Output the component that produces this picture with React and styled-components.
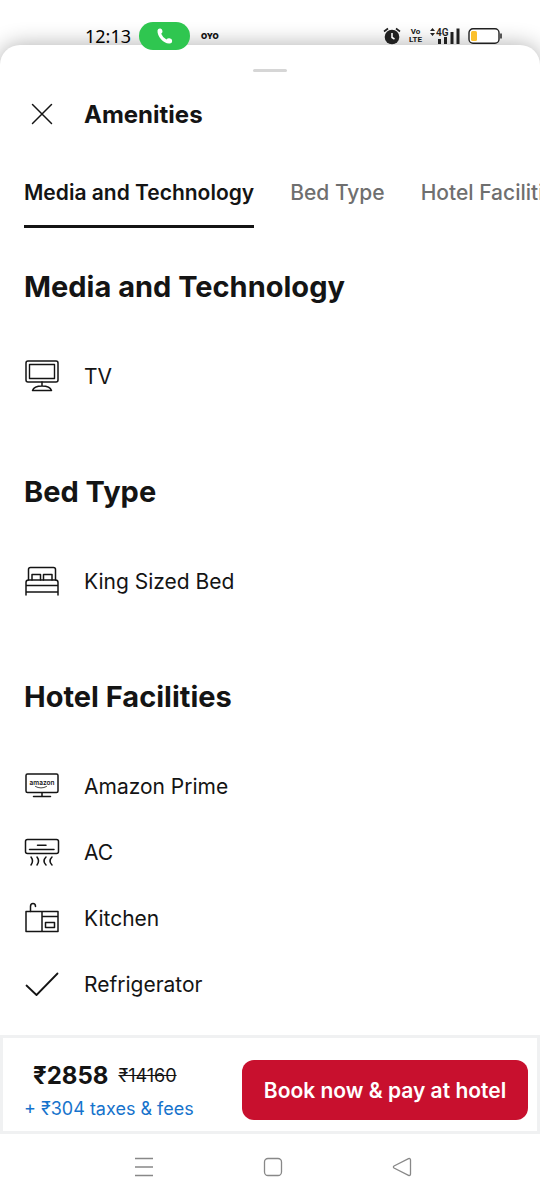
import React from 'react';
import styled, { createGlobalStyle } from 'styled-components';

const GlobalStyle = createGlobalStyle`
  * {
    box-sizing: border-box;
  }

  body {
    margin: 0;
    background: #fff;
    color: #141414;
    font-family: Inter, "Noto Sans", sans-serif;
  }

  button {
    font-family: inherit;
    color: inherit;
    border: none;
    background: none;
    padding: 0;
    cursor: pointer;
  }
`;

const Page = styled.div`
  min-height: 100vh;
  display: flex;
  flex-direction: column;
  overflow: hidden;
  background: #fff;
`;

const StatusBar = styled.div`
  position: relative;
  z-index: 1;
  height: 52px;
  padding: 20px 38px 0 85px;
  display: flex;
  justify-content: space-between;
`;

const StatusGroup = styled.div`
  display: flex;
  align-items: center;
  height: 32px;
  gap: 8px;
`;

const Time = styled.span`
  width: 46px;
  color: #000;
  font-family: "Noto Sans", sans-serif;
  font-size: 18px;
  line-height: 32px;
  white-space: nowrap;
`;

const CallPill = styled.span`
  display: flex;
  align-items: center;
  justify-content: center;
  width: 51px;
  height: 28px;
  border-radius: 14px;
  background: #2fc650;
`;

const Brand = styled.span`
  padding-left: 3px;
  font-size: 8px;
  font-weight: 900;
`;

const VoLte = styled.span`
  font-family: Roboto, sans-serif;
  font-size: 8px;
  font-weight: 700;
  line-height: 8px;
  text-align: center;
`;

const Sheet = styled.main`
  flex: 1;
  display: flex;
  flex-direction: column;
  margin-top: -7px;
  padding-top: 24px;
  border-radius: 20px 20px 0 0;
  background: #fff;
  box-shadow: 0 0 22px rgba(0, 0, 0, 0.32);
`;

const Handle = styled.div`
  align-self: center;
  width: 34px;
  height: 3px;
  border-radius: 2px;
  background: #d6d6d6;
`;

const Header = styled.header`
  display: flex;
  align-items: center;
  gap: 24px;
  height: 84px;
  padding: 0 24px;
`;

const CloseButton = styled.button`
  display: flex;
  width: 36px;
  height: 36px;
`;

const Title = styled.h1`
  margin: 0;
  font-size: 24px;
  font-weight: 700;
`;

const Tabs = styled.nav`
  display: flex;
  gap: 36px;
  padding-left: 24px;
  overflow: hidden;
`;

const Tab = styled.button`
  flex: none;
  height: 72px;
  padding-top: 4px;
  border-bottom: 3px solid ${(props) => (props.$active ? '#141414' : 'transparent')};
  color: ${(props) => (props.$active ? '#141414' : '#6f6f6f')};
  font-size: 21px;
  font-weight: ${(props) => (props.$active ? 600 : 500)};
  white-space: nowrap;
`;

const Content = styled.div`
  display: flex;
  flex-direction: column;
  gap: 62px;
  padding: 38px 24px 18px;
`;

const SectionTitle = styled.h2`
  margin: 0 0 35px;
  font-size: 29px;
  font-weight: 700;
  line-height: 42px;
`;

const List = styled.ul`
  margin: 0;
  padding: 0;
  list-style: none;
`;

const Item = styled.li`
  display: flex;
  align-items: center;
  gap: 24px;
  height: 66px;
  font-size: 21px;
`;

const Icon = styled.svg`
  flex: none;
  fill: none;
  stroke: #141414;
  stroke-width: 1.5;
  stroke-linecap: round;
  stroke-linejoin: round;
`;

const Footer = styled.footer`
  display: flex;
  align-items: center;
  justify-content: space-between;
  gap: 16px;
  min-height: 99px;
  margin-top: auto;
  padding: 12px 9px 2px 21px;
  border: 3px solid #f0f1f2;
`;

const PriceBlock = styled.div`
  padding-top: 6px;
`;

const PriceRow = styled.div`
  display: flex;
  align-items: center;
  gap: 10px;
  height: 32px;
  padding-left: 9px;
`;

const Price = styled.strong`
  font-size: 24px;
  font-weight: 700;
`;

const OldPrice = styled.s`
  font-size: 18px;
`;

const Taxes = styled.a`
  display: block;
  color: #1673cc;
  font-size: 18px;
  line-height: 34px;
  text-decoration: none;
`;

const BookButton = styled.button`
  width: 286px;
  height: 60px;
  padding-top: 2px;
  border-radius: 12px;
  background: #c8102e;
  color: #fff;
  font-size: 21px;
  font-weight: 600;
  white-space: nowrap;
`;

const NavBar = styled.nav`
  display: flex;
  align-items: center;
  justify-content: center;
  gap: 109px;
  height: 66px;
  padding-left: 6px;
`;

const NavButton = styled.button`
  display: flex;
  width: 20px;
  height: 20px;
`;

const TvIcon = () => (
  <Icon width="36" height="36">
    <rect x="2" y="3" width="32" height="21" rx="2" />
    <rect x="5.5" y="6.5" width="25" height="14" strokeWidth="1.4" />
    <path d="M18 24v4M8.5 32.5h19c-1-3-4-4.5-9.5-4.5s-8.5 1.5-9.5 4.5z" />
  </Icon>
);

const BedIcon = () => (
  <Icon width="36" height="36">
    <path d="M4.5 17V6.5q0-2 2-2h23q2 0 2 2V17M8 17v-5.5h8.5V17M19.5 17v-5.5H28V17" />
    <path d="M2 32V19.5q0-2.5 2.5-2.5h27q2.5 0 2.5 2.5V32M2 22.5h32M2 29h32" />
  </Icon>
);

const PrimeIcon = () => (
  <Icon width="36" height="36">
    <rect x="2" y="6" width="32" height="18.5" rx="1.5" />
    <path d="M18 25v3.5M9.5 28.5h17" />
    <text x="18" y="17" textAnchor="middle" fontSize="6.5" fontWeight="600" fill="#141414" stroke="none">
      amazon
    </text>
    <path d="M11.5 18.500q5.500 3 11 0" strokeWidth="0.8" />
  </Icon>
);

const AcIcon = () => (
  <Icon width="36" height="36">
    <rect x="1.5" y="5.5" width="33" height="14" rx="2" />
    <path d="M13.5 11.2h8.5M5.5 15.5h24.5" />
    <path d="M7 23q3 4 0 8M13 23q3 4 0 8M22 23q-4 4 0 8M28 23q-4 4 0 8" />
  </Icon>
);

const KitchenIcon = () => (
  <Icon width="36" height="36">
    <path d="M2 11.5h32v20H2zM18 11.5v20M18 16.5h16M21.5 22.5h9v5h-9z" />
    <path d="M6.5 11.5v-5q0-3 2.500-3t2.500 3" />
  </Icon>
);

const CheckIcon = () => (
  <Icon width="36" height="36">
    <path d="M2.5 19.5l10 9.5l21-21.5" strokeWidth="1.8" />
  </Icon>
);

const sections = [
  {
    title: 'Media and Technology',
    items: [{ label: 'TV', icon: TvIcon }],
  },
  {
    title: 'Bed Type',
    items: [{ label: 'King Sized Bed', icon: BedIcon }],
  },
  {
    title: 'Hotel Facilities',
    items: [
      { label: 'Amazon Prime', icon: PrimeIcon },
      { label: 'AC', icon: AcIcon },
      { label: 'Kitchen', icon: KitchenIcon },
      { label: 'Refrigerator', icon: CheckIcon },
    ],
  },
];

const App = () => {
  return (
    <>
      <GlobalStyle />
      <Page>
        <StatusBar>
          <StatusGroup>
            <Time>12:13</Time>
            <CallPill>
              <svg width="18" height="18" viewBox="0 0 18 18">
                <path
                  d="M1.5 3.5Q2 1 4.5 1.5q1.500 0 2 2.500.3 1.600-1.300 2.800 1.500 3.800 5.200 5.700 1.300-1.500 3-1.200 2.800.6 2.700 2.200.3 2.800-2.600 3C8 17 1 9.500 1.500 3.500z"
                  fill="#fff"
                />
              </svg>
            </CallPill>
            <Brand>OYO</Brand>
          </StatusGroup>
          <StatusGroup>
            <svg width="18" height="18" viewBox="0 0 18 18">
              <circle cx="9" cy="10" r="7.3" fill="#202020" />
              <path d="M1 4.5l4-3M17 4.5l-4-3" stroke="#202020" strokeWidth="1.6" />
              <path d="M9 6v4.5l2.5 1.5" fill="none" stroke="#fff" strokeWidth="1.5" />
            </svg>
            <VoLte>
              Vo
              <br />
              LTE
            </VoLte>
            <svg width="30" height="18" viewBox="0 0 30 18">
              <path d="M0 4l2.5-3L5 4zM0 6l2.5 3L5 6z" fill="#202020" />
              <text x="6" y="8.5" fontSize="10" fontWeight="600" fontFamily="Roboto, sans-serif" fill="#202020">
                4G
              </text>
              <path d="M8 12h3v5H8zM14 10h3v7h-3zM20.5 5h3v12h-3zM26.5 1.5h3V17h-3z" fill="#202020" />
            </svg>
            <svg width="34" height="18" viewBox="0 0 34 18">
              <rect x="1" y="1.8" width="30" height="14.5" rx="4" fill="#fff" stroke="#202020" strokeWidth="1.4" />
              <rect x="3" y="4" width="6" height="10" rx="1.5" fill="#fbc02d" />
              <path d="M33 6.5v5" stroke="#202020" strokeWidth="1.5" />
            </svg>
          </StatusGroup>
        </StatusBar>

        <Sheet>
          <Handle />
          <Header>
            <CloseButton aria-label="Close">
              <Icon width="36" height="36">
                <path d="M8.5 8.5l19 19M27.5 8.5l-19 19" />
              </Icon>
            </CloseButton>
            <Title>Amenities</Title>
          </Header>

          <Tabs>
            {sections.map((section, index) => (
              <Tab key={section.title} $active={index === 0}>
                {section.title}
              </Tab>
            ))}
          </Tabs>

          <Content>
            {sections.map((section) => (
              <section key={section.title}>
                <SectionTitle>{section.title}</SectionTitle>
                <List>
                  {section.items.map(({ label, icon: ItemIcon }) => (
                    <Item key={label}>
                      <ItemIcon />
                      {label}
                    </Item>
                  ))}
                </List>
              </section>
            ))}
          </Content>

          <Footer>
            <PriceBlock>
              <PriceRow>
                <Price>₹2858</Price>
                <OldPrice>₹14160</OldPrice>
              </PriceRow>
              <Taxes href="#taxes">+ ₹304 taxes &amp; fees</Taxes>
            </PriceBlock>
            <BookButton>Book now &amp; pay at hotel</BookButton>
          </Footer>

          <NavBar>
            <NavButton aria-label="Recent apps">
              <svg width="20" height="20">
                <path d="M1 1.5h18M1 10h18M1 18.5h18" stroke="#888" strokeWidth="1.4" />
              </svg>
            </NavButton>
            <NavButton aria-label="Home">
              <svg width="20" height="20">
                <rect x="1.5" y="1.5" width="17" height="17" rx="3.5" fill="none" stroke="#888" strokeWidth="1.3" />
              </svg>
            </NavButton>
            <NavButton aria-label="Back">
              <svg width="20" height="20">
                <path
                  d="M2 9L16.5 1.7Q18.5 1 18.5 3v14q0 2-2 1.300L2 11Q.8 10 2 9z"
                  fill="none"
                  stroke="#888"
                  strokeWidth="1.3"
                />
              </svg>
            </NavButton>
          </NavBar>
        </Sheet>
      </Page>
    </>
  );
};

export default App;
